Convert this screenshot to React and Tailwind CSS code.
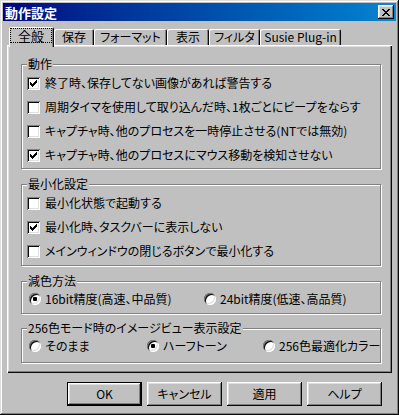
import React from "react";

const bevelOut =
  "shadow-[inset_-1px_-1px_#0a0a0a,inset_1px_1px_#ffffff,inset_-2px_-2px_#808080,inset_2px_2px_#dfdfdf]";

const Check = ({ checked }) => (
  <span className="w-[13px] h-[13px] shrink-0 bg-white flex items-center justify-center shadow-[inset_1px_1px_#808080,inset_-1px_-1px_#ffffff,inset_2px_2px_#0a0a0a,inset_-2px_-2px_#dfdfdf]">
    {checked && (
      <svg width="7" height="7" viewBox="0 0 7 7" shapeRendering="crispEdges">
        <rect x="6" y="0" width="1" height="1" />
        <rect x="5" y="1" width="2" height="1" />
        <rect x="0" y="2" width="1" height="1" />
        <rect x="4" y="2" width="3" height="1" />
        <rect x="0" y="3" width="2" height="1" />
        <rect x="3" y="3" width="3" height="1" />
        <rect x="0" y="4" width="5" height="1" />
        <rect x="1" y="5" width="3" height="1" />
        <rect x="2" y="6" width="1" height="1" />
      </svg>
    )}
  </span>
);

const Radio = ({ checked }) => (
  <span className="w-[12px] h-[12px] shrink-0 rounded-full bg-white flex items-center justify-center shadow-[inset_1px_1px_#808080,inset_-1px_-1px_#ffffff,inset_2px_2px_#0a0a0a,inset_-2px_-2px_#dfdfdf]">
    {checked && <span className="w-[4px] h-[4px] bg-black rounded-[1px]" />}
  </span>
);

const CheckRow = ({ checked, children }) => (
  <div className="h-[24px] flex items-center gap-[5px] pl-[5px]">
    <Check checked={checked} />
    <span className="leading-none">{children}</span>
  </div>
);

const RadioItem = ({ checked, width, children }) => (
  <div className={`h-[24px] flex items-center gap-[4px] shrink-0 ${width}`}>
    <Radio checked={checked} />
    <span className="leading-none">{children}</span>
  </div>
);

const Group = ({ title, className, children }) => (
  <div
    className={`relative ml-[14px] w-[360px] border border-[#808080] shadow-[inset_1px_1px_#ffffff,1px_1px_#ffffff] ${className}`}
  >
    <span className="absolute -top-[7px] left-[5px] px-[1px] bg-[#c0c0c0] leading-[12px]">
      {title}
    </span>
    {children}
  </div>
);

const tabs = [
  { label: "保存", w: "w-[40px]" },
  { label: "フォーマット", w: "w-[73px]" },
  { label: "表示", w: "w-[42px]" },
  { label: "フィルタ", w: "w-[51px]" },
  { label: "Susie Plug-in", w: "w-[81px]" },
];

const Button = ({ children, isDefault }) => (
  <button
    className={`w-[75px] h-[24px] bg-[#c0c0c0] flex items-center justify-center leading-none ${
      isDefault
        ? "border border-black shadow-[inset_-1px_-1px_#0a0a0a,inset_1px_1px_#ffffff,inset_-2px_-2px_#808080,inset_2px_2px_#dfdfdf]"
        : bevelOut
    }`}
  >
    {children}
  </button>
);

export default function App() {
  return (
    <div className="w-[399px] h-[415px] bg-[#c0c0c0] p-[3px] flex flex-col text-black text-[12px] font-['Noto_Sans_CJK_JP',sans-serif] [font-feature-settings:'palt'] shadow-[inset_-1px_-1px_#0a0a0a,inset_1px_1px_#dfdfdf,inset_-2px_-2px_#808080,inset_2px_2px_#ffffff]">
      {/* Title bar */}
      <div className="h-[18px] shrink-0 flex items-center justify-between pl-[2px] pr-[2px] bg-gradient-to-r from-[#000080] to-[#1084d0]">
        <span className="text-white font-bold text-[13px] leading-none">動作設定</span>
        <button className={`w-[16px] h-[14px] bg-[#c0c0c0] flex items-center justify-center ${bevelOut}`}>
          <svg width="8" height="7" viewBox="0 0 8 7" shapeRendering="crispEdges">
            <path d="M0 0h2v1h1v1h2v-1h1v-1h2v1h-1v1h-1v1h-1v1h1v1h1v1h1v1h-2v-1h-1v-1h-2v1h-1v1h-2v-1h1v-1h1v-1h1v-1h-1v-1h-1z" />
          </svg>
        </button>
      </div>

      {/* Tabs */}
      <div className="h-[18px] mt-[6px] ml-[6px] flex items-end shrink-0">
        <div className="relative z-10 w-[45px] h-[20px] -mb-[2px] bg-[#c0c0c0] rounded-t-[2px] pt-[1px] pl-[1px] shadow-[inset_1px_1px_#ffffff,inset_-1px_0_#0a0a0a,inset_-2px_0_#808080]">
          <div className="w-[42px] h-[15px] border border-dotted border-black flex items-center justify-center leading-none text-[13px]">
            全般
          </div>
        </div>
        {tabs.map((t) => (
          <div
            key={t.label}
            className={`${t.w} h-[16px] bg-[#c0c0c0] rounded-t-[2px] flex items-center justify-center leading-none shadow-[inset_1px_1px_#ffffff,inset_-1px_0_#0a0a0a,inset_-2px_0_#808080]`}
          >
            {t.label}
          </div>
        ))}
      </div>

      {/* Tab panel */}
      <div className="mx-[4px] h-[328px] shrink-0 flex flex-col shadow-[inset_1px_1px_#ffffff,inset_-1px_-1px_#0a0a0a,inset_-2px_-2px_#808080,inset_2px_2px_#dfdfdf]">
        <Group title="動作" className="mt-[19px] pt-[6px] pb-[1px]">
          <CheckRow checked>終了時、保存してない画像があれば警告する</CheckRow>
          <CheckRow>周期タイマを使用して取り込んだ時、1枚ごとにビープをならす</CheckRow>
          <CheckRow>キャプチャ時、他のプロセスを一時停止させる(NTでは無効)</CheckRow>
          <CheckRow checked>キャプチャ時、他のプロセスにマウス移動を検知させない</CheckRow>
        </Group>

        <Group title="最小化設定" className="mt-[15px] pt-[6px] pb-[2px]">
          <CheckRow>最小化状態で起動する</CheckRow>
          <CheckRow checked>最小化時、タスクバーに表示しない</CheckRow>
          <CheckRow>メインウィンドウの閉じるボタンで最小化する</CheckRow>
        </Group>

        <Group title="減色方法" className="mt-[15px] pt-[5px] pb-[2px]">
          <div className="flex pl-[7px]">
            <RadioItem checked width="w-[175px]">16bit精度(高速、中品質)</RadioItem>
            <RadioItem>24bit精度(低速、高品質)</RadioItem>
          </div>
        </Group>

        <Group title="256色モード時のイメージビュー表示設定" className="mt-[14px] pt-[5px] pb-[4px]">
          <div className="flex pl-[7px]">
            <RadioItem width="w-[118px]">そのまま</RadioItem>
            <RadioItem checked width="w-[116px]">ハーフトーン</RadioItem>
            <RadioItem>256色最適化カラー</RadioItem>
          </div>
        </Group>
      </div>

      {/* Buttons */}
      <div className="flex justify-end gap-[5px] mt-[9px] pr-[14px]">
        <Button isDefault>OK</Button>
        <Button>キャンセル</Button>
        <Button>適用</Button>
        <Button>ヘルプ</Button>
      </div>
    </div>
  );
}
